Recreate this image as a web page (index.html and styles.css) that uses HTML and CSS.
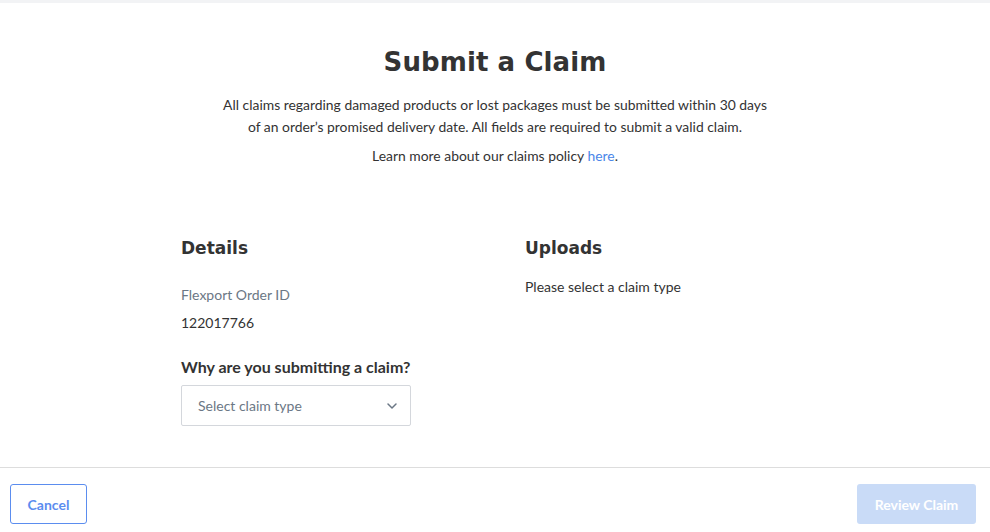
FILE: index.html
```html
<!DOCTYPE html>
<html lang="en">
<head>
  <meta charset="UTF-8" />
  <title>Submit a Claim</title>
  <link rel="stylesheet" href="styles.css">
</head>
<body>
  <div class="topbar"></div>
  <main class="page">
    <section class="intro">
      <h1>Submit a Claim</h1>
      <p>All claims regarding damaged products or lost packages must be submitted within 30 days<br>of an order’s promised delivery date. All fields are required to submit a valid claim.</p>
      <p>Learn more about our claims policy <a href="#">here</a>.</p>
    </section>

    <section class="columns">
      <div class="col">
        <h2>Details</h2>
        <div class="field-label">Flexport Order ID</div>
        <div class="field-value">122017766</div>
        <label class="question" for="claimType">Why are you submitting a claim?</label>
        <div class="select" id="claimType">
          <span>Select claim type</span>
          <svg width="12" height="8" viewBox="0 0 12 8"><path d="M2 2l4 4 4-4" fill="none" stroke="#6b7785" stroke-width="1.5" stroke-linecap="round" stroke-linejoin="round"/></svg>
        </div>
      </div>
      <div class="col">
        <h2>Uploads</h2>
        <div class="note">Please select a claim type</div>
      </div>
    </section>
  </main>
  <footer class="actions">
    <button class="btn btn-outline">Cancel</button>
    <button class="btn btn-primary" disabled>Review Claim</button>
  </footer>
</body>
</html>
```

FILE: styles.css
```css
body {
  margin: 0;
  font-family: 'Lato', sans-serif;
  color: #333;
  background: #fff;
  height: 532px;
  display: flex;
  flex-direction: column;
}
.topbar {
  height: 3px;
  background: #f2f3f5;
}
.page {
  flex: 1;
}
.intro {
  text-align: center;
  padding-top: 42px;
}
h1 {
  font-family: 'DejaVu Sans', sans-serif;
  font-size: 26px;
  font-weight: 700;
  letter-spacing: 0.1px;
  margin: 0 0 15px;
  line-height: 34px;
}
.intro p {
  font-size: 13.9px;
  line-height: 22px;
  margin: 0 0 7px;
}
.intro a {
  color: #4a86e8;
  text-decoration: none;
}
.columns {
  width: 628px;
  margin: 69px auto 0;
  display: grid;
  grid-template-columns: 314px 314px;
  column-gap: 30px;
}
h2 {
  font-family: 'DejaVu Sans', sans-serif;
  font-size: 17px;
  font-weight: 700;
  margin: 0 0 25px;
  line-height: 24px;
}
.field-label {
  font-size: 14px;
  color: #6b7785;
  line-height: 20px;
  margin-bottom: 8px;
}
.field-value {
  font-size: 14px;
  line-height: 20px;
  margin-bottom: 22px;
}
.question {
  display: block;
  font-size: 16px;
  font-weight: 700;
  line-height: 24px;
  margin-bottom: 6px;
}
.select {
  width: 230px;
  height: 41px;
  box-sizing: border-box;
  border: 1px solid #d4d7dc;
  border-radius: 2px;
  display: flex;
  align-items: center;
  justify-content: space-between;
  padding: 0 12px 0 16px;
  font-size: 14px;
  color: #6b7785;
}
.note {
  font-size: 14px;
  line-height: 20px;
  margin-top: -8px;
}
.actions {
  border-top: 1px solid #ddd;
  height: 65px;
  box-sizing: border-box;
  display: flex;
  justify-content: space-between;
  align-items: flex-start;
  padding: 16px 14px 0 10px;
}
.btn {
  font-family: 'Lato', sans-serif;
  font-size: 14px;
  font-weight: 700;
  height: 40px;
  border-radius: 3px;
  padding: 0 16px;
}
.btn-outline {
  width: 77px;
  background: #fff;
  border: 1px solid #5b8def;
  color: #5b8def;
}
.btn-primary {
  width: 119px;
  background: #c9dbf7;
  border: none;
  color: #fff;
}
```
